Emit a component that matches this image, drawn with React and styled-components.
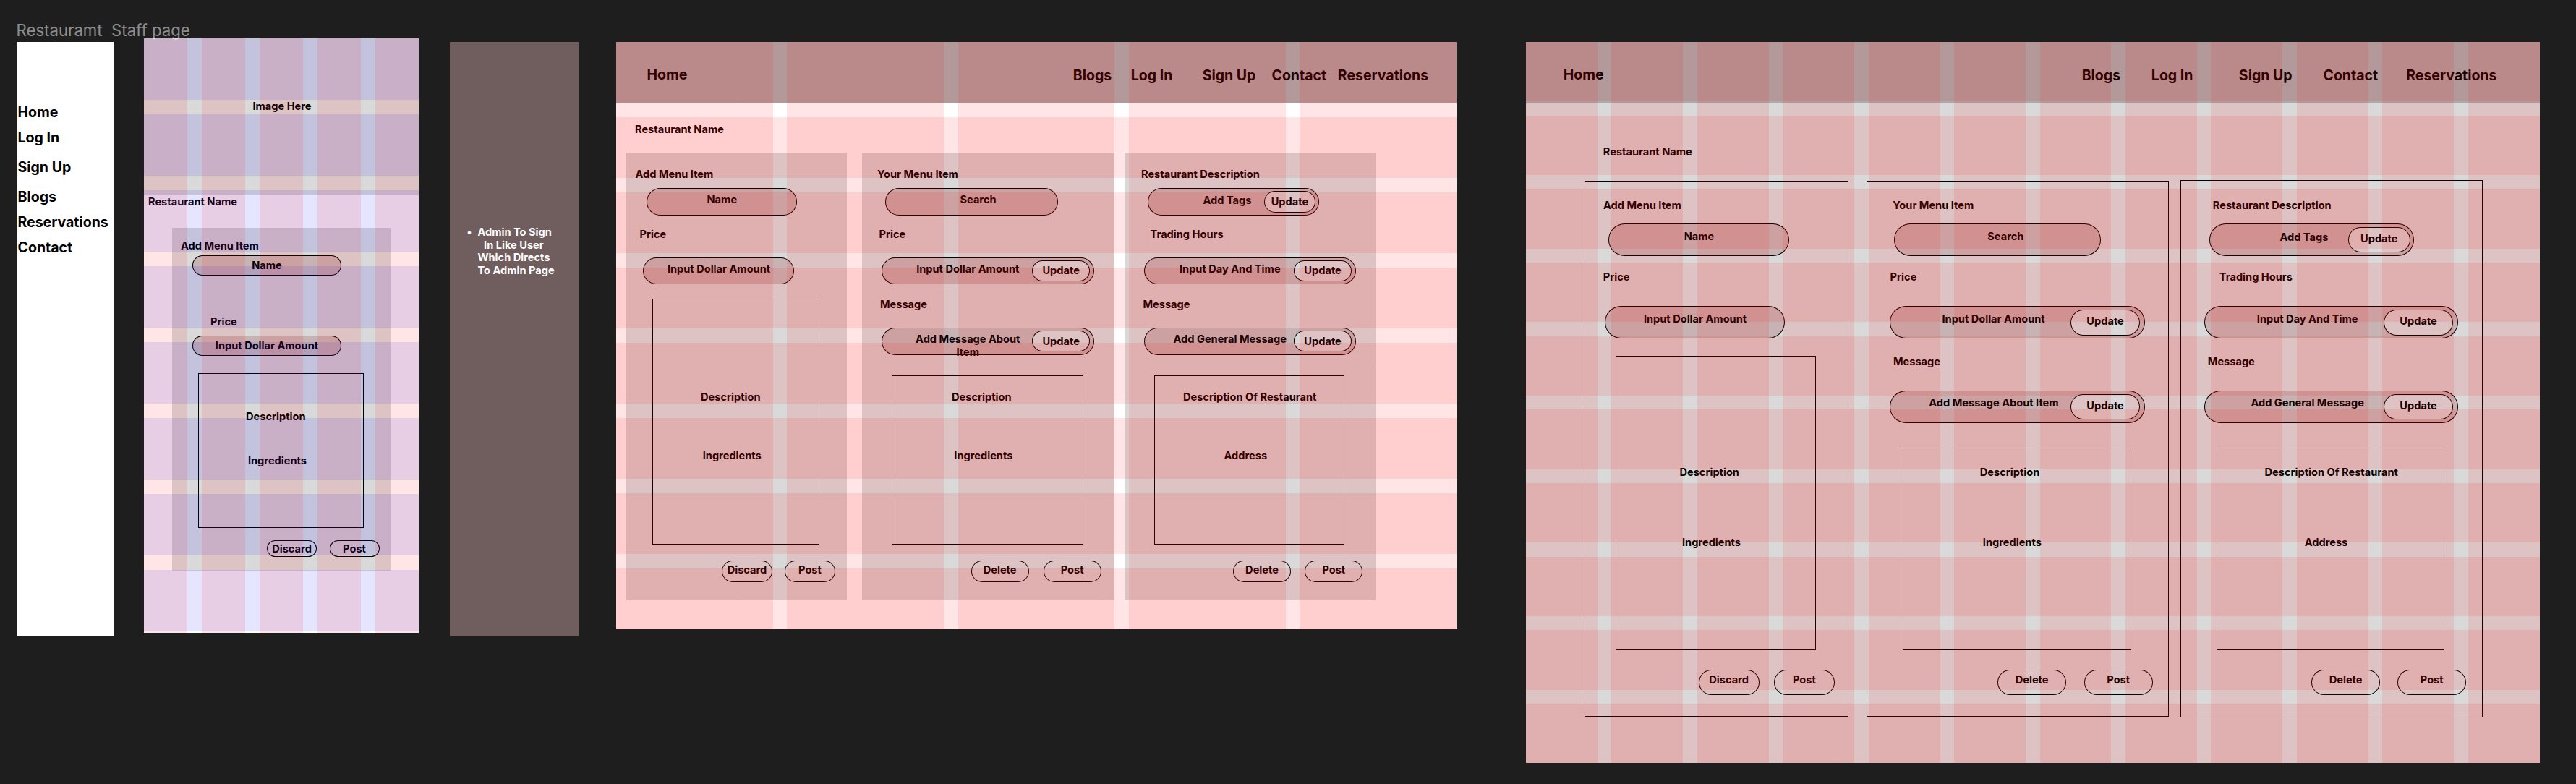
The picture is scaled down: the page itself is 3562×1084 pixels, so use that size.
import React from 'react';
import styled, { createGlobalStyle } from 'styled-components';

const GlobalStyle = createGlobalStyle`
  body { margin: 0; background: #1e1e1e; }
  * { box-sizing: border-box; }
`;

const Canvas = styled.main`
  width: 3562px;
  height: 1084px;
  overflow: hidden;
  background: #1e1e1e;
  color: #000;
  font-family: Inter, 'Liberation Sans', sans-serif;
`;

const PageTitle = styled.h1`
  position: relative;
  z-index: 1;
  margin: 0;
  height: 58px;
  padding: 28px 0 0 22.5px;
  font-size: 22.2px;
  font-weight: 400;
  line-height: 28px;
  white-space: pre;
  color: rgba(255, 255, 255, 0.5);
`;

const Frames = styled.div`
  display: flex;
  align-items: flex-start;
  padding-left: 23px;
`;

const Sidebar = styled.nav`
  display: flex;
  flex-direction: column;
  flex: none;
  width: 133.5px;
  height: 822px;
  padding: 85px 0 0 1.5px;
  background: #fff;
`;

const NavLink = styled.span`
  display: block;
  flex: none;
  width: ${(p) => (p.$w ? `${p.$w}px` : 'auto')};
  margin-top: ${(p) => p.$mt || 0}px;
  height: 24px;
  font-size: 19.5px;
  font-weight: 700;
  line-height: 24px;
  white-space: nowrap;
`;

const NotePanel = styled.aside`
  flex: none;
  width: 177.6px;
  height: 822px;
  margin-left: 43.4px;
  padding: 255px 0 0 33px;
  background: #705d5d;
  color: #fff;
`;

const NoteList = styled.ul`
  margin: 0;
  padding: 0;
  width: 118px;
  list-style: none;
`;

const NoteItem = styled.li`
  position: relative;
  margin-left: -6px;
  padding: 0 13px 0 11px;
  font-size: 14.6px;
  font-weight: 700;
  line-height: 17.6px;
  text-align: center;
  white-space: nowrap;

  &::before {
    content: '•';
    position: absolute;
    left: -4px;
  }
`;

const Frame = styled.section`
  position: relative;
  flex: none;
  width: ${(p) => p.$w}px;
  height: ${(p) => p.$h}px;
  margin-left: ${(p) => p.$ml}px;
  margin-top: ${(p) => p.$mt || 0}px;
  background: ${(p) => p.$bg || '#fff'};
`;

/* Layout-grid guides drawn over the frame's content. */
const Guides = styled.div`
  position: absolute;
  inset: 0;
  pointer-events: none;
  background:
    repeating-linear-gradient(
      to right,
      rgba(255, 0, 0, 0.1) 0 ${(p) => p.$col}px,
      transparent ${(p) => p.$col}px ${(p) => p.$col + p.$gap}px
    ),
    repeating-linear-gradient(
      to bottom,
      ${(p) => p.$rowTint || 'rgba(255, 0, 0, 0.1)'} 0 ${(p) => p.$row}px,
      transparent ${(p) => p.$row}px ${(p) => p.$row + p.$gap}px
    );
`;

const Header = styled.header`
  display: flex;
  height: 84.6px;
  padding: 34px 0 0 ${(p) => p.$pl}px;
  background: #aaa;
`;

const Label = styled.span`
  display: block;
  width: max-content;
  height: 18px;
  margin-top: ${(p) => p.$mt}px;
  margin-left: ${(p) => p.$ml}px;
  font-size: 14.6px;
  font-weight: 700;
  line-height: 18px;
  white-space: nowrap;
`;

const ImageBox = styled.div`
  height: 217px;
  padding: 85px 0 0 2px;
  background: #d9d9d9;
  font-size: 14.6px;
  font-weight: 700;
  line-height: 18px;
  text-align: center;
`;

const Cards = styled.div`
  display: flex;
  align-items: flex-start;
  margin-top: ${(p) => p.$mt}px;
`;

const CardBox = styled.article`
  flex: none;
  width: ${(p) => p.$w}px;
  height: ${(p) => p.$h}px;
  margin-left: ${(p) => p.$ml}px;
  margin-top: ${(p) => p.$mt || 0}px;
  padding-top: ${(p) => (p.$mt ? -p.$mt : 0)}px;
  background: #d9d9d9;
  box-shadow: ${(p) => (p.$outlined ? 'inset 0 0 0 1px #000' : 'none')};
`;

const Pill = styled.div`
  display: flex;
  align-items: flex-start;
  width: ${(p) => p.$w}px;
  height: ${(p) => p.$h}px;
  margin-top: ${(p) => p.$mt}px;
  margin-left: ${(p) => p.$ml}px;
  border-radius: ${(p) => p.$h / 2}px;
  background: #c7b3b3;
  box-shadow: inset 0 0 0 1px #000;
`;

const PillText = styled.span`
  flex: none;
  width: ${(p) => p.$area - (2 * p.$cx - p.$area)}px;
  margin-left: ${(p) => 2 * p.$cx - p.$area}px;
  padding-top: ${(p) => p.$top}px;
  font-size: 14.6px;
  font-weight: 700;
  line-height: 17.6px;
  text-align: center;
  white-space: nowrap;
`;

const Button = styled.button`
  flex: none;
  display: block;
  width: ${(p) => p.$w}px;
  height: ${(p) => p.$h}px;
  margin: ${(p) => p.$mt || 0}px 0 0;
  padding: ${(p) => p.$top}px 0 ${(p) => p.$h - p.$top - 18}px;
  border: 0;
  border-radius: ${(p) => p.$h / 2}px;
  background: #d9d9d9;
  box-shadow: inset 0 0 0 1px #000;
  color: inherit;
  font-family: inherit;
  font-size: 14.6px;
  font-weight: 700;
  line-height: 18px;
  text-align: center;
  white-space: nowrap;
`;

const DetailBox = styled.div`
  display: flex;
  flex-direction: column;
  justify-content: flex-end;
  width: ${(p) => p.$w}px;
  height: ${(p) => p.$h}px;
  margin-top: ${(p) => p.$mt}px;
  margin-left: ${(p) => p.$ml}px;
  padding-bottom: ${(p) => p.$pb}px;
  box-shadow: inset 0 0 0 1px #000;
`;

const DetailText = styled.span`
  margin-top: ${(p) => p.$mt || 0}px;
  padding-left: ${(p) => Math.max(0, 2 * p.$shift)}px;
  padding-right: ${(p) => Math.max(0, -2 * p.$shift)}px;
  height: 18px;
  font-size: 14.6px;
  font-weight: 700;
  line-height: 18px;
  text-align: center;
  white-space: nowrap;
`;

const Actions = styled.div`
  display: flex;
  gap: ${(p) => p.$gap}px;
  margin-top: ${(p) => p.$mt}px;
  margin-left: ${(p) => p.$ml}px;
`;

const mobile = {
  height: 474,
  labelMt: [16, 55],
  pillMt: [4, 10],
  pillH: [28, 28],
  textTop: [5.6, 6.2],
  shortMt: 24,
  shortH: 214,
  detailGap: 43,
  detailPb: 84,
  actionsMt: 17,
  actionH: 23,
  actionTop: 3,
};

const tablet = {
  height: 619,
  labelMt: [21, 17, 19],
  pillMt: [10, 23, 23],
  pillH: [38, 37, 38],
  textTop: [8.2, 8.2, 8.2],
  updateMt: 4,
  updateH: [30, 29, 29],
  updateTop: [6, 5, 6],
  shortMt: 20,
  shortH: 340,
  longMt: 28,
  longH: 234,
  detailGap: 63,
  detailPb: 114,
  actionsMt: 22,
  actionH: 30,
  actionTop: 4,
};

const desktop = {
  height: 741,
  labelMt: [25, 20, 23],
  pillMt: [16, 31, 31],
  pillH: [45, 45, 45],
  textTop: [10.2, 10.2, 9.2],
  updateMt: 5,
  updateH: [35, 36, 35],
  updateTop: [7, 7, 7],
  shortMt: 24,
  shortH: 407,
  longMt: 34,
  longH: 280,
  detailGap: 79,
  detailPb: 140,
  actionsMt: 27,
  actionH: 35,
  actionTop: 5,
};

const mobileCard = {
  ml: 39, w: 302,
  fields: [
    { label: 'Add Menu Item', lx: 12, text: 'Name', x: 27.7, w: 206.5, cx: 103.3 },
    { label: 'Price', lx: 53, text: 'Input Dollar Amount', x: 27.7, w: 206.5, cx: 103.3 },
  ],
  box: { x: 36, w: 229, lines: [['Description', -7.2], ['Ingredients', -5.1]] },
  actions: { x: 131, w: 69, gap: 17.5, names: ['Discard', 'Post'] },
};

const tabletCards = [
  {
    ml: 14, w: 305,
    fields: [
      { label: 'Add Menu Item', lx: 12.5, text: 'Name', x: 28, w: 208.5, cx: 104.3 },
      { label: 'Price', lx: 18.5, text: 'Input Dollar Amount', x: 23.5, w: 208.5, cx: 104.5 },
    ],
    box: { x: 36, w: 231.5, lines: [['Description', -7.4], ['Ingredients', -5.5]] },
    actions: { x: 132, w: 70, gap: 17, names: ['Discard', 'Post'] },
  },
  {
    ml: 21, w: 349,
    fields: [
      { label: 'Your Menu Item', lx: 21, text: 'Search', x: 32, w: 239, cx: 128.6 },
      { label: 'Price', lx: 23.5, text: 'Input Dollar Amount', x: 27, w: 294.5, cx: 119.3, update: [208.2, 80] },
      { label: 'Message', lx: 25, text: ['Add Message About', 'Item'], x: 27, w: 294.5, cx: 119.3, update: [208.2, 80] },
    ],
    box: { x: 41.3, w: 264.7, lines: [['Description', -8.3], ['Ingredients', -5.8]] },
    actions: { x: 150.6, w: 80, gap: 20, names: ['Delete', 'Post'] },
  },
  {
    ml: 14.5, w: 346.5,
    fields: [
      { label: 'Restaurant Description', lx: 22.5, text: 'Add Tags', x: 31.5, w: 237, cx: 110, drop: 1, update: [160.9, 71] },
      { label: 'Trading Hours', lx: 35, text: 'Input Day And Time', x: 26.3, w: 293, cx: 119, update: [207.3, 80] },
      { label: 'Message', lx: 25, text: 'Add General Message', x: 26.3, w: 293, cx: 119, update: [207.3, 80] },
    ],
    box: { x: 40.5, w: 263, lines: [['Description Of Restaurant', 0.7], ['Address', -5.2]] },
    actions: { x: 149.5, w: 80, gap: 19.3, names: ['Delete', 'Post'] },
  },
];

const desktopCards = [
  {
    ml: 81, w: 365,
    fields: [
      { label: 'Add Menu Item', lx: 26, text: 'Name', x: 33.5, w: 249.5, cx: 125 },
      { label: 'Price', lx: 25.7, text: 'Input Dollar Amount', x: 28, w: 249.5, cx: 125 },
    ],
    box: { x: 43, w: 277, lines: [['Description', -8.8], ['Ingredients', -6]] },
    actions: { x: 157.6, w: 84, gap: 20.3, names: ['Discard', 'Post'] },
  },
  {
    ml: 25.3, w: 417.5,
    fields: [
      { label: 'Your Menu Item', lx: 36, text: 'Search', x: 38.2, w: 285.5, cx: 153.9 },
      { label: 'Price', lx: 32.3, text: 'Input Dollar Amount', x: 32.1, w: 352.8, cx: 143.2, update: [249.8, 95.8] },
      { label: 'Message', lx: 36.7, text: 'Add Message About Item', x: 32.1, w: 352.8, cx: 143.6, update: [249.8, 95.8] },
    ],
    box: { x: 49.5, w: 316.5, lines: [['Description', -10], ['Ingredients', -6.7]] },
    actions: { x: 180.7, w: 95.3, gap: 24.3, names: ['Delete', 'Post'] },
  },
  {
    ml: 16, mt: -1, w: 418,
    fields: [
      { label: 'Restaurant Description', lx: 45, text: 'Add Tags', x: 40.2, w: 283, cx: 130.9, drop: 1, update: [192, 85.6] },
      { label: 'Trading Hours', lx: 54, text: 'Input Day And Time', x: 33.1, w: 351.3, cx: 142.8, update: [248.2, 96] },
      { label: 'Message', lx: 38, text: 'Add General Message', x: 33.1, w: 351.3, cx: 142.8, update: [248.2, 96] },
    ],
    box: { x: 50, w: 315, lines: [['Description Of Restaurant', 1.5], ['Address', -5.8]] },
    actions: { x: 181.2, w: 95.3, gap: 23.8, names: ['Delete', 'Post'] },
  },
];

function Field({ field, size, index }) {
  const { label, lx, text, x, w, cx, update, drop = 0 } = field;
  const lines = Array.isArray(text) ? text : [text];
  return (
    <>
      <Label $mt={size.labelMt[index]} $ml={lx}>{label}</Label>
      <Pill $mt={size.pillMt[index]} $ml={x} $w={w} $h={size.pillH[index]}>
        <PillText $area={update ? update[0] : w} $cx={cx} $top={size.textTop[index] + drop}>
          {lines.map((line, i) => (
            <React.Fragment key={line}>
              {i > 0 && <br />}
              {line}
            </React.Fragment>
          ))}
        </PillText>
        {update && (
          <Button $w={update[1]} $h={size.updateH[index]} $mt={size.updateMt} $top={size.updateTop[index]}>
            Update
          </Button>
        )}
      </Pill>
    </>
  );
}

function Card({ card, size, outlined }) {
  const { fields, box, actions } = card;
  const long = fields.length > 2;
  return (
    <CardBox $ml={card.ml} $mt={card.mt} $w={card.w} $h={size.height + (card.mt ? 2 : 0)} $outlined={outlined}>
      {fields.map((field, i) => (
        <Field key={field.label} field={field} size={size} index={i} />
      ))}
      <DetailBox
        $ml={box.x}
        $w={box.w}
        $mt={long ? size.longMt : size.shortMt}
        $h={long ? size.longH : size.shortH}
        $pb={size.detailPb}
      >
        {box.lines.map(([line, shift], i) => (
          <DetailText key={line} $shift={shift} $mt={i ? size.detailGap : 0}>{line}</DetailText>
        ))}
      </DetailBox>
      <Actions $ml={actions.x} $gap={actions.gap} $mt={size.actionsMt}>
        {actions.names.map((name) => (
          <Button key={name} $w={actions.w} $h={size.actionH} $top={size.actionTop}>{name}</Button>
        ))}
      </Actions>
    </CardBox>
  );
}

function TopNav({ pl, widths }) {
  const names = ['Home', 'Blogs', 'Log In', 'Sign Up', 'Contact', 'Reservations'];
  return (
    <Header $pl={pl}>
      {names.map((name, i) => (
        <NavLink key={name} $w={widths[i]} $mt={i ? 0 : -1}>{name}</NavLink>
      ))}
    </Header>
  );
}

export default function App() {
  return (
    <Canvas>
      <GlobalStyle />
      <PageTitle>{'Restauramt  Staff page'}</PageTitle>
      <Frames>
        <Sidebar>
          <NavLink>Home</NavLink>
          <NavLink $mt={11}>Log In</NavLink>
          <NavLink $mt={17}>Sign Up</NavLink>
          <NavLink $mt={17}>Blogs</NavLink>
          <NavLink $mt={11}>Reservations</NavLink>
          <NavLink $mt={11}>Contact</NavLink>
        </Sidebar>

        <Frame $w={380} $h={822} $ml={42.5} $mt={-5}>
          <ImageBox>Image Here</ImageBox>
          <Label $mt={0} $ml={6}>Restaurant Name</Label>
          <Cards $mt={27}>
            <Card card={mobileCard} size={mobile} />
          </Cards>
          <Guides $col={60.4} $row={85.5} $gap={19.5} $rowTint="rgba(0, 0, 255, 0.1)" />
        </Frame>

        <NotePanel>
          <NoteList>
            <NoteItem>
              Admin To Sign<br />In Like User<br />Which Directs<br />To Admin Page
            </NoteItem>
          </NoteList>
        </NotePanel>

        <Frame $w={1162} $h={812} $ml={52}>
          <TopNav pl={42.5} widths={[589.3, 80, 98.9, 95.8, 91.4]} />
          <Label $mt={27.4} $ml={26}>Restaurant Name</Label>
          <Cards $mt={23}>
            {tabletCards.map((card) => (
              <Card key={card.ml} card={card} size={tablet} />
            ))}
          </Cards>
          <Guides $col={216.8} $row={84.5} $gap={19.5} />
        </Frame>

        <Frame $w={1402} $h={997} $ml={96} $bg="#d9d9d9">
          <TopNav pl={51.7} widths={[717, 96.2, 121, 116.6, 114.8]} />
          <Label $mt={58.4} $ml={106.8}>Restaurant Name</Label>
          <Cards $mt={31}>
            {desktopCards.map((card) => (
              <Card key={card.ml} card={card} size={desktop} outlined />
            ))}
          </Cards>
          <Guides $col={98.95} $row={82.2} $gap={19.47} />
        </Frame>
      </Frames>
    </Canvas>
  );
}
